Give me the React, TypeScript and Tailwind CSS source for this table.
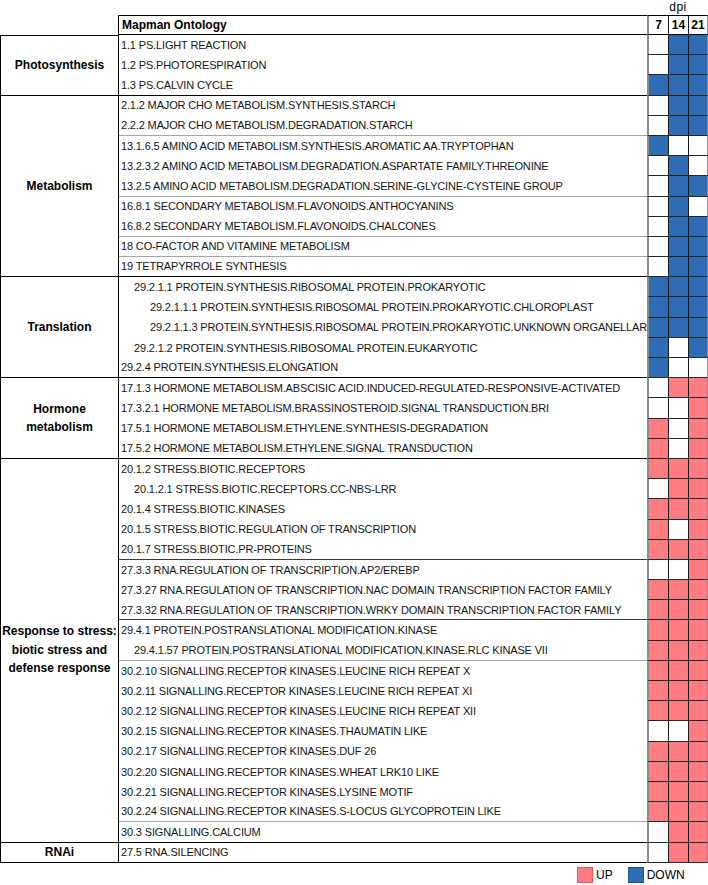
import React from 'react'

type Row = { t: string; v: string; pad?: number; sep?: 'g' | 'd' }
type Group = { label: string[]; rows: Row[] }

const groups: Group[] = [
  {
    label: ['Photosynthesis'],
    rows: [
      { t: '1.1 PS.LIGHT REACTION', v: 'WBB' },
      { t: '1.2 PS.PHOTORESPIRATION', v: 'WBB' },
      { t: '1.3 PS.CALVIN CYCLE', v: 'BBB' },
    ],
  },
  {
    label: ['Metabolism'],
    rows: [
      { t: '2.1.2 MAJOR CHO METABOLISM.SYNTHESIS.STARCH', v: 'WBB' },
      { t: '2.2.2 MAJOR CHO METABOLISM.DEGRADATION.STARCH', v: 'WBB', sep: 'g' },
      { t: '13.1.6.5 AMINO ACID METABOLISM.SYNTHESIS.AROMATIC AA.TRYPTOPHAN', v: 'BWW' },
      { t: '13.2.3.2 AMINO ACID METABOLISM.DEGRADATION.ASPARTATE FAMILY.THREONINE', v: 'WBW' },
      { t: '13.2.5 AMINO ACID METABOLISM.DEGRADATION.SERINE-GLYCINE-CYSTEINE GROUP', v: 'WBB', sep: 'g' },
      { t: '16.8.1 SECONDARY METABOLISM.FLAVONOIDS.ANTHOCYANINS', v: 'WBW' },
      { t: '16.8.2 SECONDARY METABOLISM.FLAVONOIDS.CHALCONES', v: 'WBB', sep: 'g' },
      { t: '18 CO-FACTOR AND VITAMINE METABOLISM', v: 'WBB', sep: 'g' },
      { t: '19 TETRAPYRROLE SYNTHESIS', v: 'WBB' },
    ],
  },
  {
    label: ['Translation'],
    rows: [
      { t: '29.2.1.1 PROTEIN.SYNTHESIS.RIBOSOMAL PROTEIN.PROKARYOTIC', v: 'BBB', pad: 1 },
      { t: '29.2.1.1.1 PROTEIN.SYNTHESIS.RIBOSOMAL PROTEIN.PROKARYOTIC.CHLOROPLAST', v: 'BBB', pad: 2 },
      { t: '29.2.1.1.3 PROTEIN.SYNTHESIS.RIBOSOMAL PROTEIN.PROKARYOTIC.UNKNOWN ORGANELLAR', v: 'BBB', pad: 2 },
      { t: '29.2.1.2 PROTEIN.SYNTHESIS.RIBOSOMAL PROTEIN.EUKARYOTIC', v: 'BWB', pad: 1 },
      { t: '29.2.4 PROTEIN.SYNTHESIS.ELONGATION', v: 'BWW' },
    ],
  },
  {
    label: ['Hormone', 'metabolism'],
    rows: [
      { t: '17.1.3 HORMONE METABOLISM.ABSCISIC ACID.INDUCED-REGULATED-RESPONSIVE-ACTIVATED', v: 'WPP' },
      { t: '17.3.2.1 HORMONE METABOLISM.BRASSINOSTEROID.SIGNAL TRANSDUCTION.BRI', v: 'WWP' },
      { t: '17.5.1 HORMONE METABOLISM.ETHYLENE.SYNTHESIS-DEGRADATION', v: 'PWP' },
      { t: '17.5.2 HORMONE METABOLISM.ETHYLENE.SIGNAL TRANSDUCTION', v: 'PWP' },
    ],
  },
  {
    label: ['Response to stress:', 'biotic stress and', 'defense response'],
    rows: [
      { t: '20.1.2 STRESS.BIOTIC.RECEPTORS', v: 'PPP' },
      { t: '20.1.2.1 STRESS.BIOTIC.RECEPTORS.CC-NBS-LRR', v: 'WPP', pad: 1 },
      { t: '20.1.4 STRESS.BIOTIC.KINASES', v: 'PPP' },
      { t: '20.1.5 STRESS.BIOTIC.REGULATION OF TRANSCRIPTION', v: 'PWP' },
      { t: '20.1.7 STRESS.BIOTIC.PR-PROTEINS', v: 'PPP', sep: 'd' },
      { t: '27.3.3 RNA.REGULATION OF TRANSCRIPTION.AP2/EREBP', v: 'WWP' },
      { t: '27.3.27 RNA.REGULATION OF TRANSCRIPTION.NAC DOMAIN TRANSCRIPTION FACTOR FAMILY', v: 'PPP' },
      { t: '27.3.32 RNA.REGULATION OF TRANSCRIPTION.WRKY DOMAIN TRANSCRIPTION FACTOR FAMILY', v: 'PPP', sep: 'd' },
      { t: '29.4.1 PROTEIN.POSTRANSLATIONAL MODIFICATION.KINASE', v: 'PPP' },
      { t: '29.4.1.57 PROTEIN.POSTRANSLATIONAL MODIFICATION.KINASE.RLC KINASE VII', v: 'PPP', pad: 1, sep: 'g' },
      { t: '30.2.10 SIGNALLING.RECEPTOR KINASES.LEUCINE RICH REPEAT X', v: 'PPP' },
      { t: '30.2.11 SIGNALLING.RECEPTOR KINASES.LEUCINE RICH REPEAT XI', v: 'PPP' },
      { t: '30.2.12 SIGNALLING.RECEPTOR KINASES.LEUCINE RICH REPEAT XII', v: 'PPP' },
      { t: '30.2.15 SIGNALLING.RECEPTOR KINASES.THAUMATIN LIKE', v: 'WWP' },
      { t: '30.2.17 SIGNALLING.RECEPTOR KINASES.DUF 26', v: 'PPP' },
      { t: '30.2.20 SIGNALLING.RECEPTOR KINASES.WHEAT LRK10 LIKE', v: 'PPP' },
      { t: '30.2.21 SIGNALLING.RECEPTOR KINASES.LYSINE MOTIF', v: 'PPP' },
      { t: '30.2.24 SIGNALLING.RECEPTOR KINASES.S-LOCUS GLYCOPROTEIN LIKE', v: 'PPP', sep: 'g' },
      { t: '30.3 SIGNALLING.CALCIUM', v: 'WPP' },
    ],
  },
  {
    label: ['RNAi'],
    rows: [{ t: '27.5 RNA.SILENCING', v: 'WPP' }],
  },
]

const fill = (c: string) => (c === 'B' ? 'bg-[#2e6db4]' : c === 'P' ? 'bg-[#ff7c80]' : 'bg-white')
const padCls = ['pl-[2px]', 'pl-[15px]', 'pl-[31px]']

const Cells = ({ v }: { v: string }) => (
  <>
    <div className={`w-[21px] border-l-2 border-l-[#8c8c8c] border-b border-b-[#262626] ${fill(v[0])}`} />
    <div className={`w-[20px] border-l border-l-[#1a1a1a] border-b border-b-[#262626] ${fill(v[1])}`} />
    <div className={`w-[20px] border-l border-l-[#1a1a1a] border-r border-r-[#8c8c8c] border-b border-b-[#262626] ${fill(v[2])}`} />
  </>
)

const GroupBlock = ({ g, first }: { g: Group; first: boolean }) => (
  <div className="flex">
    <div
      className={`w-[119px] flex flex-col items-center justify-center border-l border-r border-b border-black font-bold text-[12px] leading-[18.5px] text-center ${first ? 'border-t' : ''}`}
    >
      {g.label.map((l) => (
        <span key={l}>{l}</span>
      ))}
    </div>
    <div className="flex flex-col">
      {g.rows.map((r, i) => {
        const last = i === g.rows.length - 1
        const sep = last ? 'border-b border-black' : r.sep === 'g' ? 'border-b border-[#a6a6a6]' : r.sep === 'd' ? 'border-b border-[#3a3a3a]' : ''
        return (
          <div key={r.t} className="flex h-[20.2px]">
            <div className={`w-[528px] flex items-center whitespace-nowrap overflow-hidden text-[11px] tracking-[-0.15px] text-[#141414] ${padCls[r.pad ?? 0]} ${sep}`}>
              {r.t}
            </div>
            <Cells v={r.v} />
          </div>
        )
      })}
    </div>
  </div>
)

export default function App() {
  return (
    <div className="w-[708px] h-[885px] bg-white text-black font-['Liberation_Sans',Arial,sans-serif]">
      <div className="flex h-[15px]">
        <div className="w-[649px]" />
        <div className="w-[58px] text-center text-[12px] leading-[14px] tracking-[0.5px]">dpi</div>
      </div>
      <div className="flex h-[20px]">
        <div className="w-[118px]" />
        <div className="w-[529px] border-l border-t border-b border-black pl-[3px] flex items-center font-bold text-[12px]">Mapman Ontology</div>
        <div className="w-[21px] border-l-2 border-l-[#8c8c8c] border-t border-t-black border-b border-b-black flex items-center justify-center font-bold text-[12px]">7</div>
        <div className="w-[20px] border-l border-l-[#1a1a1a] border-t border-t-black border-b border-b-black flex items-center justify-center font-bold text-[12px]">14</div>
        <div className="w-[20px] border-l border-l-[#1a1a1a] border-r border-r-[#8c8c8c] border-t border-t-black border-b border-b-black flex items-center justify-center font-bold text-[12px]">21</div>
      </div>
      {groups.map((g, i) => (
        <GroupBlock key={g.label[0]} g={g} first={i === 0} />
      ))}
      <div className="flex items-center h-[16px] mt-[4px] pl-[577px] text-[12px]">
        <div className="w-[16px] h-[16px] bg-[#ff7c80] border border-[#e8555c]" />
        <span className="ml-[3px]">UP</span>
        <div className="w-[16px] h-[16px] ml-[15px] bg-[#2e6db4] border border-[#24568f]" />
        <span className="ml-[3px]">DOWN</span>
      </div>
    </div>
  )
}
